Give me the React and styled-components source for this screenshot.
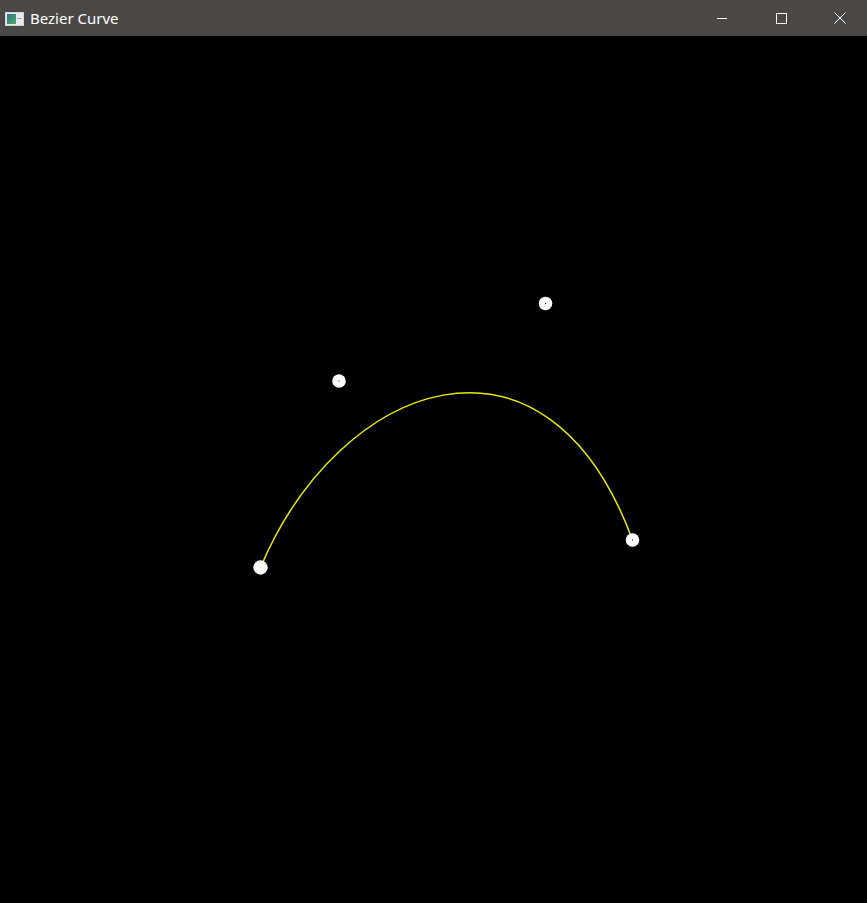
import styled, { createGlobalStyle } from 'styled-components';

const P = [
  [260.5, 531.5],
  [339, 345],
  [545.5, 267.5],
  [632.5, 504],
];

export default function App() {
  const d = `M ${P[0][0]} ${P[0][1]} C ${P[1][0]} ${P[1][1]}, ${P[2][0]} ${P[2][1]}, ${P[3][0]} ${P[3][1]}`;

  return (
    <>
      <GlobalStyle />
      <Window>
        <TitleBar>
          <AppIcon width="19" height="14" viewBox="0 0 19 14">
            <defs>
              <linearGradient id="ig" x1="0" y1="0" x2="1" y2="1">
                <stop offset="0" stopColor="#2f6f8c" />
                <stop offset="1" stopColor="#4fae6c" />
              </linearGradient>
            </defs>
            <rect x="0.5" y="0.5" width="18" height="13" fill="#e9ecef" stroke="#cfd3d6" />
            <rect x="2" y="2" width="9" height="10" fill="url(#ig)" />
            <rect x="12" y="6" width="5" height="1" fill="#9aa0a4" />
          </AppIcon>
          <Title>Bezier Curve</Title>
          <Controls>
            <CtrlButton>
              <svg width="12" height="12" viewBox="0 0 12 12">
                <path d="M1 6.5 H11" stroke="#fff" strokeWidth="1" />
              </svg>
            </CtrlButton>
            <CtrlButton>
              <svg width="12" height="12" viewBox="0 0 12 12">
                <rect x="1.5" y="1.5" width="10" height="10" fill="none" stroke="#fff" strokeWidth="1" />
              </svg>
            </CtrlButton>
            <CtrlButton>
              <svg width="12" height="12" viewBox="0 0 12 12">
                <path d="M0.5 0.5 L11.5 11.5 M11.5 0.5 L0.5 11.5" stroke="#fff" strokeWidth="1" />
              </svg>
            </CtrlButton>
          </Controls>
        </TitleBar>

        <Canvas>
          <svg width="867" height="867" viewBox="0 0 867 867">
            <path d={d} fill="none" stroke="#eaea00" strokeWidth="1.5" />
            {P.map(([x, y], i) => (
              <g key={i}>
                <circle cx={x} cy={y} r={i === 0 ? 7.2 : 6.8} fill="#fff" />
                <rect x={x - 0.5} y={y - 0.5} width="1" height="1" fill={i === 0 ? '#eaea00' : '#000'} />
              </g>
            ))}
          </svg>
        </Canvas>
      </Window>
    </>
  );
}

//============= Styled Components =============
const GlobalStyle = createGlobalStyle`
  html, body {
    margin: 0;
    padding: 0;
    background: #000;
  }
`;

const Window = styled.div`
  width: 867px;
  height: 903px;
  display: flex;
  flex-direction: column;
  overflow: hidden;
`;

const TitleBar = styled.div`
  height: 36px;
  flex: none;
  display: flex;
  align-items: center;
  background: #4a4846;
  padding-left: 5px;
`;

const AppIcon = styled.svg`
  flex: none;
  margin-right: 6px;
  margin-top: 1px;
`;

const Title = styled.span`
  color: #fff;
  font-family: "Noto Sans", "Open Sans", sans-serif;
  font-size: 15px;
  flex: 1;
`;

const Controls = styled.div`
  display: flex;
  height: 100%;
  margin-right: -2px;
`;

const CtrlButton = styled.div`
  width: 59px;
  height: 100%;
  display: flex;
  align-items: center;
  justify-content: center;
`;

const Canvas = styled.div`
  flex: 1;
  background: #000;
  line-height: 0;
`;
